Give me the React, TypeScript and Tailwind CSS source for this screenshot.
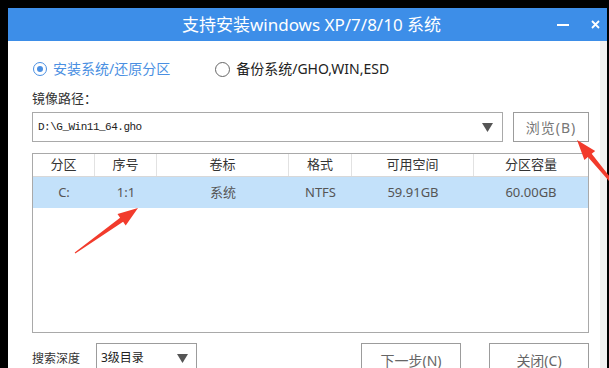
const font = { fontFamily: '"Noto Sans", "Noto Sans CJK SC", sans-serif' };

const cols = [
  { w: "w-[62px]", head: "分区", cell: "C:" },
  { w: "w-[62px]", head: "序号", cell: "1:1" },
  { w: "w-[132px]", head: "卷标", cell: "系统" },
  { w: "w-[63px]", head: "格式", cell: "NTFS" },
  { w: "w-[122px]", head: "可用空间", cell: "59.91GB" },
  { w: "flex-1", head: "分区容量", cell: "60.00GB" },
];

function Caret() {
  return (
    <svg width="11" height="9" viewBox="0 0 11 9">
      <path d="M0 0 H11 L5.5 9 Z" fill="#555" />
    </svg>
  );
}

function Arrows() {
  return (
    <svg className="absolute inset-0 pointer-events-none" width="609" height="368" viewBox="0 0 609 368">
      {/* arrow to 1:1 */}
      <polygon
        points="75.3,253.4 123.1,221.7 125.7,225.4 138,208 117.5,214 120.1,217.7 74.7,252.6"
        fill="#f23b2c"
      />
      {/* arrow to browse */}
      <polygon
        points="613.2,181 591.7,153.8 595.2,150.9 577,140 584.4,159.9 587.9,157 610.8,183"
        fill="#f23b2c"
      />
    </svg>
  );
}

export default function App() {
  return (
    <div className="relative w-[609px] h-[368px] overflow-hidden bg-black pt-[8px] pl-[8px] pr-[2px]" style={font}>
      <div className="h-full flex flex-col">
        {/* title bar */}
        <div className="h-[33px] shrink-0 grid grid-cols-[1fr_auto_1fr] items-center bg-[#3d8ee8] text-white">
          <div />
          <div className="text-[17px] leading-none pl-[8px]">支持安装windows XP/7/8/10 系统</div>
          <div className="flex justify-end items-center gap-[22px] pr-[7px]">
            <svg width="12" height="2" viewBox="0 0 12 2">
              <rect width="12" height="2" fill="#fff" />
            </svg>
            <svg width="9" height="9" viewBox="0 0 9 9">
              <path d="M1 1 L8 8 M8 1 L1 8" stroke="#fff" strokeWidth="1.8" />
            </svg>
          </div>
        </div>

        {/* body */}
        <div className="flex-1 flex bg-white">
          <div className="flex-1 pl-[24px] pr-[11px] pt-[20px]">
            {/* radios */}
            <div className="h-[16px] flex items-center text-[14px] leading-none">
              <div className="flex items-center gap-[6px] ml-[1px]">
                <div className="w-[14px] h-[14px] rounded-full border border-[#4a8fe2] flex items-center justify-center">
                  <div className="w-[6px] h-[6px] rounded-full bg-[#4a8fe2]" />
                </div>
                <span className="text-[#4a8fe2]">安装系统/还原分区</span>
              </div>
              <div className="flex items-center gap-[6px] ml-[45px]">
                <div className="w-[15px] h-[15px] rounded-full border border-[#666]" />
                <span className="text-[#222]">备份系统/GHO,WIN,ESD</span>
              </div>
            </div>

            {/* path label */}
            <div className="mt-[15px] h-[14px] text-[13px] leading-none text-[#333]">镜像路径：</div>

            {/* path input */}
            <div className="mt-[6px] flex gap-[10px]">
              <div className="w-[471px] h-[30px] border border-[#a9a9a9] flex items-center justify-between pl-[5px] pr-[9px]">
                <span
                  className="text-[11px] tracking-[-0.5px] text-[#222]"
                  style={{ fontFamily: '"Liberation Mono", "Noto Sans CJK SC", monospace' }}
                >
                  D:\G_Win11_64.gho
                </span>
                <Caret />
              </div>
              <button className="w-[76px] h-[30px] border border-[#9c9c9c] text-[14px] text-[#777] tracking-[1px] flex items-center justify-center">
                浏览(B)
              </button>
            </div>

            {/* partition table */}
            <div className="mt-[11px] h-[180px] border border-[#a9a9a9] flex flex-col">
              <div className="h-[23px] flex border-b border-[#d8d8d8] text-[13px] text-[#333]">
                {cols.map((c, i) => (
                  <div
                    key={c.head}
                    className={`${c.w} flex items-center justify-center ${i < cols.length - 1 ? "border-r border-[#e2e2e2]" : ""}`}
                  >
                    {c.head}
                  </div>
                ))}
              </div>
              <div className="h-[31px] flex bg-[#c3e1fa] text-[13px] text-[#555]">
                {cols.map((c) => (
                  <div key={c.head} className={`${c.w} flex items-center justify-center`}>
                    {c.cell}
                  </div>
                ))}
              </div>
            </div>

            {/* bottom controls */}
            <div className="mt-[10px] flex items-start">
              <span className="mt-[10px] text-[12px] leading-none text-[#333] w-[64px]">搜索深度</span>
              <div className="w-[101px] h-[30px] border border-[#9c9c9c] flex items-center justify-between pl-[4px] pr-[8px]">
                <span className="text-[12px] text-[#222]">3级目录</span>
                <Caret />
              </div>
              <button className="ml-auto w-[100px] h-[34px] border border-[#9c9c9c] text-[14px] text-[#666] flex items-center justify-center">
                下一步(N)
              </button>
              <button className="ml-[28px] w-[100px] h-[34px] border border-[#9c9c9c] text-[14px] text-[#666] flex items-center justify-center">
                关闭(C)
              </button>
            </div>
          </div>
          <div className="w-[7px] bg-[#f1f1f1]" />
        </div>
      </div>
      <Arrows />
    </div>
  );
}
